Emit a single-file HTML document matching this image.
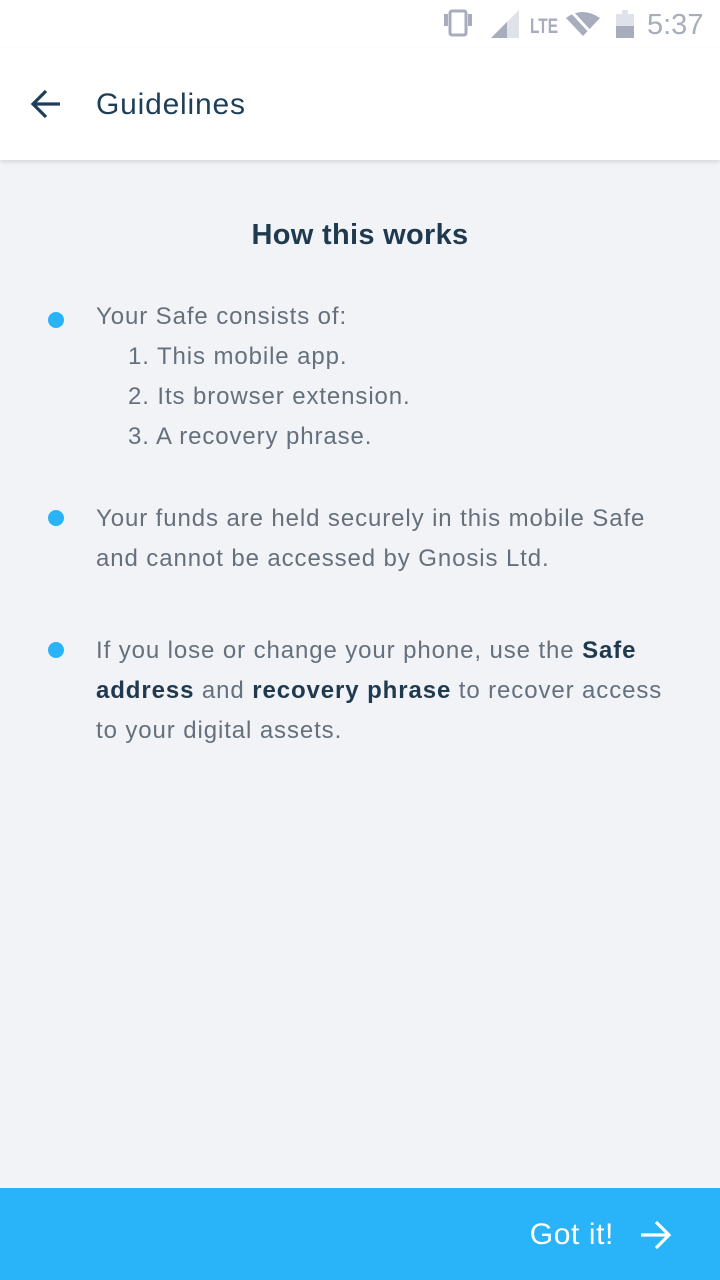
<!DOCTYPE html>
<html><head><style>
body{margin:0;width:720px;height:1280px;background:#f2f3f7;font-family:"Liberation Sans",sans-serif;position:relative;overflow:hidden}
.sb{position:absolute;top:0;left:0;width:720px;height:48px;background:#fff}
.tb{position:absolute;top:48px;left:0;width:720px;height:112px;background:#fff;box-shadow:0 2px 4px rgba(0,0,0,.12)}
.t{position:absolute;left:96px;top:40px;font-size:30px;color:#1f3f58;letter-spacing:0.8px}
h1{position:absolute;top:219px;left:0;width:720px;text-align:center;margin:0;font-size:29px;color:#1f3a4f;font-weight:bold;letter-spacing:0.3px}
.p{position:absolute;left:96px;width:576px;font-size:24px;line-height:40px;color:#66707c;letter-spacing:0.9px}
.p b{color:#1f3a4f}
.d{position:absolute;left:48px;width:16px;height:16px;border-radius:50%;background:#29b3f9}
.btn{position:absolute;left:0;top:1188px;width:720px;height:92px;background:#29b3f9}
.btn span{position:absolute;right:106px;top:30px;color:#fff;font-size:30px;letter-spacing:0.6px}
</style></head><body>
<div class="sb">
<svg width="290" height="50" style="position:absolute;left:430px;top:0" fill="#a7adbd">
<rect x="14" y="14" width="4" height="12"/><rect x="20" y="11" width="16" height="24" rx="2" fill="none" stroke="#a7adbd" stroke-width="3"/><rect x="38" y="14" width="4" height="12"/>
<polygon points="61,38 89,10 89,38" fill="#e0e2ea"/><polygon points="61,38 77,22 77,38"/>
<text x="100" y="33" font-size="21" font-family="Liberation Sans" fill="#a7adbd" font-weight="bold" textLength="28" lengthAdjust="spacingAndGlyphs">LTE</text>
<path d="M136 18 Q152 6 170 18 L153 36Z"/><line x1="140" y1="10" x2="164" y2="36" stroke="#fff" stroke-width="3"/>
<rect x="186" y="14" width="18" height="24" fill="#e0e2ea"/><rect x="192" y="10" width="6" height="4" fill="#e0e2ea"/><rect x="186" y="26" width="18" height="12"/>
<text x="217" y="34" font-size="29" font-family="Liberation Sans" fill="#a7adbd">5:37</text>
</svg></div>
<div class="tb">
<svg width="40" height="40" style="position:absolute;left:28px;top:37px"><path d="M6 19H32M18 6L5 19L18 32" stroke="#1f3f58" stroke-width="3.2" fill="none"/></svg>
<div class="t">Guidelines</div></div>
<h1>How this works</h1>
<div class="d" style="top:312px"></div>
<div class="p" style="top:297px">Your Safe consists of:<br><span style="padding-left:32px">1. This mobile app.</span><br><span style="padding-left:32px">2. Its browser extension.</span><br><span style="padding-left:32px">3. A recovery phrase.</span></div>
<div class="d" style="top:510px"></div>
<div class="p" style="top:499px">Your funds are held securely in this mobile Safe and cannot be accessed by Gnosis Ltd.</div>
<div class="d" style="top:642px"></div>
<div class="p" style="top:631px">If you lose or change your phone, use the <b>Safe address</b> and <b>recovery phrase</b> to recover access to your digital assets.</div>
<div class="btn"><span>Got it!</span>
<svg width="36" height="36" style="position:absolute;left:638px;top:29px"><path d="M3 18H31M18 5L31 18L18 31" stroke="#fff" stroke-width="3.2" fill="none"/></svg></div>
</body></html>
